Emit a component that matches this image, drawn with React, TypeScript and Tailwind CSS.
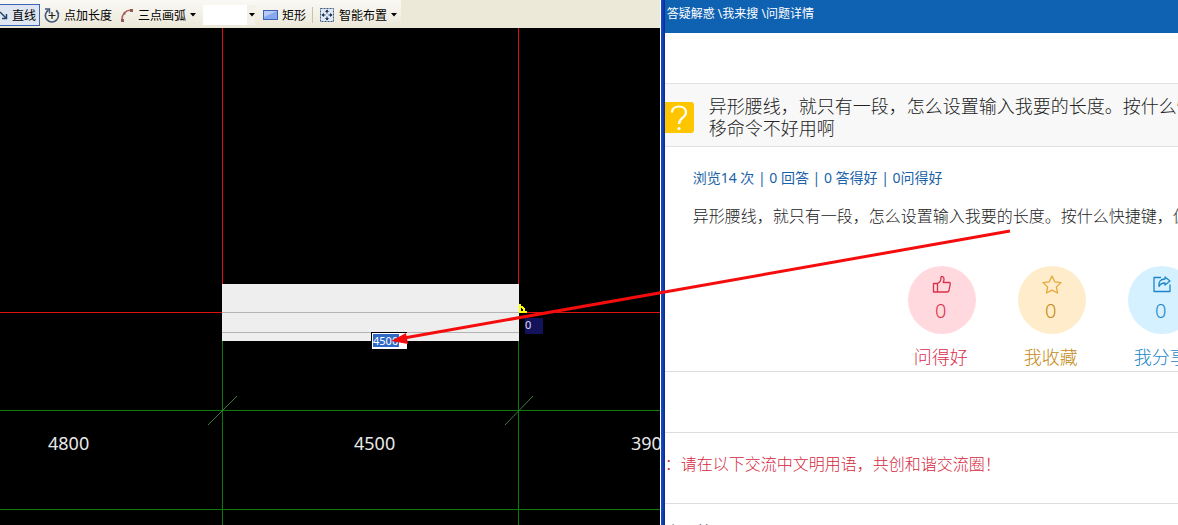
import { ReactNode } from 'react'

const GREEN = '#0a7a0a'
const RED = '#e01010'

interface ToolButtonProps {
  icon: ReactNode
  label: string
  active?: boolean
  menu?: boolean
}

function Caret() {
  return (
    <svg width="6" height="4" viewBox="0 0 6 4" className="shrink-0">
      <path d="M0 0h6L3 3.5z" fill="#000" />
    </svg>
  )
}

function ToolButton({ icon, label, active, menu }: ToolButtonProps) {
  return (
    <button
      type="button"
      className={
        active
          ? 'flex h-[22px] shrink-0 items-center gap-1 border border-l-0 border-[#3a66b5] bg-[#dfe6f2] pr-[3px]'
          : 'flex h-[22px] shrink-0 items-center gap-1'
      }
    >
      {icon}
      <span className="pt-0.5">{label}</span>
      {menu && <Caret />}
    </button>
  )
}

function Toolbar() {
  return (
    <div className="flex h-7 shrink-0 items-center overflow-hidden bg-[#ece9d8] text-xs leading-4 whitespace-nowrap text-black">
      <div className="flex h-7 items-center bg-linear-to-b from-[#faf9f5] to-[#ebe7d8] pt-px pr-1">
        <ToolButton
          active
          label="直线"
          icon={
            <svg width="8" height="16" viewBox="0 0 8 16" fill="none">
              <path d="M0 5l6 6M6.5 7v4.500H2" stroke="#27466f" strokeWidth="1.5" />
            </svg>
          }
        />
        <div className="ml-1 flex">
          <ToolButton
            label="点加长度"
            icon={
              <svg width="16" height="16" viewBox="0 0 16 16" fill="none">
                <path d="M4.500 3A6.500 6.500 0 1 0 12 3.500" stroke="#3f587c" strokeWidth="1.600" />
                <path d="M1 2h4.500v4.500M15 7l-2.500-4" stroke="#3f587c" strokeWidth="1.400" />
                <path d="M8 5v7M4.500 8.500h7" stroke="#222" strokeWidth="1.200" />
              </svg>
            }
          />
        </div>
        <div className="ml-2 flex">
          <ToolButton
            menu
            label="三点画弧"
            icon={
              <svg width="14" height="16" viewBox="0 0 14 16" fill="none">
                <path d="M2 13C2 7 5 3.500 11 3" stroke="#b0625a" strokeWidth="1.500" />
                <path d="M1 12h3v3H1zM10 2h3v3h-3zM3.500 5.500h2v2h-2z" fill="#8f5a58" />
              </svg>
            }
          />
        </div>
        <button type="button" aria-label="选项" className="ml-[7px] flex h-5 w-[52px] items-center justify-end bg-linear-to-r from-white from-85% to-[#f4f1e8] to-85%">
          <Caret />
        </button>
        <div className="ml-2 flex">
          <ToolButton
            label="矩形"
            icon={
              <svg width="15" height="12" viewBox="0 0 15 12">
                <rect x="0.5" y="1.5" width="14" height="9" fill="#86a8ee" stroke="#3d62b4" />
                <path d="M1 2h13L1 8z" fill="#b6cbf8" />
              </svg>
            }
          />
        </div>
        <div className="mx-1.5 h-4 w-px bg-[#c5c2b2]"></div>
        <ToolButton
          menu
          label="智能布置"
          icon={
            <svg width="16" height="16" viewBox="0 0 16 16" fill="none">
              <rect x="1.500" y="1.500" width="13" height="13" fill="#dde7f5" stroke="#3d5479" strokeDasharray="2 1" />
              <path d="M8 3v3.500M8 9.500V13M3 8h3.500M9.500 8H13" stroke="#1f2f4d" />
              <path d="M6 5l2-2.500L10 5zM6 11l2 2.500 2-2.500zM5 6L2.500 8 5 10zM11 6l2.500 2L11 10z" fill="#1f2f4d" />
            </svg>
          }
        />
      </div>
    </div>
  )
}

function DrawingCanvas() {
  return (
    <div className="relative min-h-0 flex-1 overflow-hidden bg-black">
      <svg className="block h-full w-full" fill="none" shapeRendering="crispEdges">
        {/* axis grid */}
        <path d="M222.500 0V284M518.500 0V284" stroke={RED} />
        <line x1="0" y1="284.500" x2="100%" y2="284.500" stroke={RED} />
        <line x1="222.500" y1="313" x2="222.500" y2="100%" stroke={GREEN} />
        <line x1="518.500" y1="284" x2="518.500" y2="100%" stroke={GREEN} />
        <line x1="0" y1="382.500" x2="100%" y2="382.500" stroke={GREEN} />
        <line x1="0" y1="481.500" x2="100%" y2="481.500" stroke={GREEN} />
        <path d="M208 397l29-29M505 397l28-29" stroke="#3f7a3f" shapeRendering="auto" />
        {/* slab */}
        <rect x="222" y="256" width="297" height="57" fill="#eee" />
        <path d="M222 284.500h297M222 304.500h297" stroke="#b4b4b4" />
        <path d="M519.500 276v9M519 283.500h8M519 278.500h3l2 3v2" stroke="#ffff00" strokeWidth="2" />
        <g fill="#e8e8e8" fontFamily="'Noto Sans', 'Open Sans', sans-serif" fontSize="18" shapeRendering="auto">
          <text x="48" y="422">4800</text>
          <text x="354" y="422">4500</text>
          <text x="631" y="422">3900</text>
        </g>
      </svg>
      <div className="absolute top-[304px] left-[371px] flex h-[17px] w-9 border-t border-l border-black bg-white p-px">
        <input
          aria-label="长度"
          defaultValue="4500"
          className="h-[13px] w-[26px] bg-[#316ac5] text-[11px] leading-3 text-white outline-none"
        />
      </div>
      <div className="absolute top-[290px] left-[525px] h-4 w-[18px] bg-[#15125c] text-[11px] leading-[14px] text-[#dcdcf0]">0</div>
    </div>
  )
}

interface ActionProps {
  icon: ReactNode
  label: string
  circle: string
  color: string
}

function Action({ icon, label, circle, color }: ActionProps) {
  return (
    <button type="button" className={'flex w-[68px] shrink-0 flex-col items-center ' + color}>
      <span className={'flex h-[68px] w-[68px] flex-col items-center rounded-full pt-2 ' + circle}>
        {icon}
        <span className="pt-px pr-0.5 text-xl leading-7">0</span>
      </span>
      <span className="pt-2.5 pr-0.5 text-lg leading-[26px] whitespace-nowrap">{label}</span>
    </button>
  )
}

function QuestionPage() {
  return (
    <div className="flex min-w-0 flex-1 flex-col overflow-hidden bg-white whitespace-nowrap text-[#222]">
      <nav className="h-[33px] shrink-0 bg-[#0f62b2] pt-[5px] pl-0.5 text-xs leading-[18px] text-white">
        <a href="#home">答疑解惑</a> \<a href="#search">我来搜</a> \<a href="#detail">问题详情</a>
      </nav>

      <div className="mt-[50px] flex h-16 shrink-0 items-start border-y border-[#e2e2e2] bg-[#f8f8f8]">
        <div className="mt-[18px] flex h-[31px] w-[29px] shrink-0 items-center justify-center rounded-r-[3px] bg-[#ffc600]">
          <svg width="18" height="26" viewBox="0 0 18 26" fill="none">
            <path d="M2 7.500C2 4 5 1.500 9 1.500s7 2.500 7 6c0 5-7 5.500-7 11.500" stroke="#fff" strokeWidth="2.200" />
            <circle cx="9" cy="23.500" r="1.600" fill="#fff" />
          </svg>
        </div>
        <h1 className="pt-[11px] pl-[15px] text-lg leading-[22px] font-light">
          异形腰线，就只有一段，怎么设置输入我要的长度。按什么快捷键，偏
          <br />
          移命令不好用啊
        </h1>
      </div>

      <p className="pt-5 pl-7 text-sm leading-[22px] text-[#1a62a8]">浏览14 次 | 0 回答 | 0 答得好 | 0问得好</p>
      <p className="pt-4 pl-7 text-base leading-[22px] font-light">
        异形腰线，就只有一段，怎么设置输入我要的长度。按什么快捷键，偏移命令不好用啊
      </p>

      <div className="flex gap-[42px] border-b border-[#ddd] pt-[39px] pb-px pl-[243px] font-light">
        <Action
          label="问得好"
          circle="bg-[#ffd9de]"
          color="text-[#d9304c]"
          icon={
            <svg width="20" height="22" viewBox="0 0 20 22" fill="none" stroke="currentColor" strokeWidth="1.300" strokeLinejoin="round">
              <path d="M1.500 9.500h4v8.500h-4zM5.500 9.500C8 8.500 9 6.500 9 3.500c0-1.500 3-1.500 3 1.500 0 1.500-.5 2.500-.8 3.500H17c1.500 0 1.500 1.500 1 2.500l-1 5.500c-.3 1-1 1.500-2 1.500H5.500" />
            </svg>
          }
        />
        <Action
          label="我收藏"
          circle="bg-[#ffeccb]"
          color="text-[#c48a14]"
          icon={
            <svg width="20" height="22" viewBox="0 0 20 22" fill="none" stroke="#e5a93a" strokeWidth="1.300" strokeLinejoin="round">
              <path d="M10 2l2.700 5.800 6.300.8-4.600 4.300L15.500 19 10 16.200 4.500 19l1.100-6.100L1 8.600l6.300-.8z" />
            </svg>
          }
        />
        <Action
          label="我分享"
          circle="bg-[#d5f0ff]"
          color="text-[#1c86c8]"
          icon={
            <svg width="20" height="22" viewBox="0 0 20 22" fill="none" stroke="currentColor" strokeWidth="1.300" strokeLinejoin="round">
              <path d="M9 3.500H2v14h16v-7M7 12.500c-1-5 2-7.500 6-7.500V3l5 4-5 4V9c-3 0-5 1-6 3.500z" />
            </svg>
          }
        />
      </div>

      <div className="mt-[60px] border-y border-[#ddd] pt-4 pb-6 text-base leading-[30px] font-light text-[#d5283c]">：请在以下交流中文明用语，共创和谐交流圈！</div>
      <h2 className="pt-[18px] text-base leading-5">个回答</h2>
    </div>
  )
}

export default function App() {
  return (
    <div className="relative flex h-screen overflow-hidden bg-white font-['Noto_Sans','Noto_Sans_CJK_SC',sans-serif]">
      <div className="flex w-[56%] shrink-0 flex-col">
        <Toolbar />
        <DrawingCanvas />
      </div>
      <div className="w-[5px] shrink-0 border-l border-white bg-linear-to-r from-[#1c50c8] to-[#0a2a9a]"></div>
      <QuestionPage />

      {/* pointer from the question to the length box */}
      <svg className="pointer-events-none absolute inset-0 h-full w-full">
        <path d="M1010 231L404 338" stroke="#f50d0d" strokeWidth="3" />
        <path d="M391 341l15-8 2 11z" fill="#f50d0d" />
      </svg>
    </div>
  )
}
